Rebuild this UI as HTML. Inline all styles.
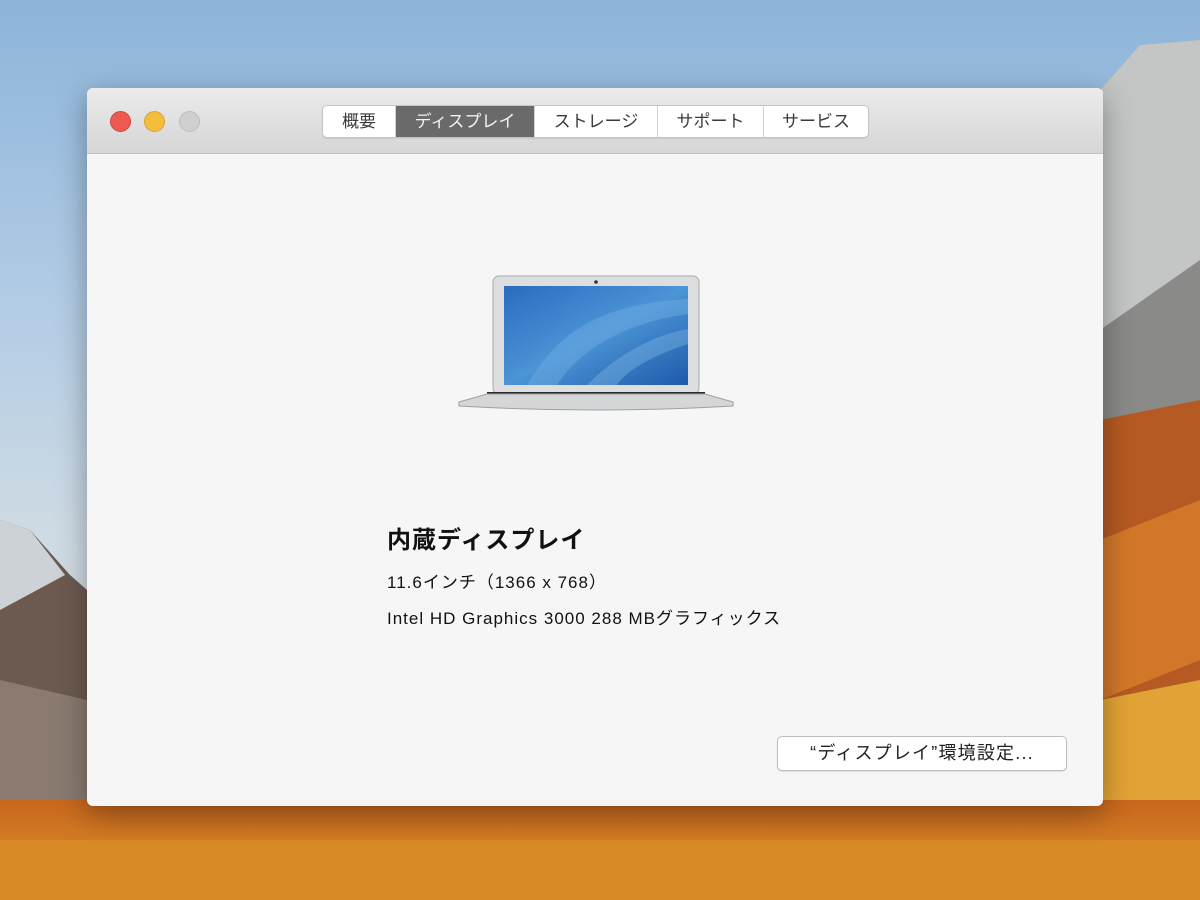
<!DOCTYPE html>
<html><head><meta charset="utf-8"><style>
body{margin:0;width:1200px;height:900px;overflow:hidden;position:relative;font-family:"Liberation Sans","Noto Sans CJK JP",sans-serif;
background:linear-gradient(180deg,#8db4da 0%,#b3cde5 35%,#cfdbe4 60%,#d8dde0 100%);}
.bg{position:absolute;inset:0}
.win{position:absolute;left:87px;top:88px;width:1016px;height:718px;background:#f6f6f6;border-radius:6px;box-shadow:0 8px 30px rgba(0,0,0,.35);overflow:hidden}
.tb{height:65px;background:linear-gradient(#ebebeb,#d6d6d6);border-bottom:1px solid #c2c2c2}
.dot{position:absolute;top:23px;width:20px;height:20px;border-radius:50%}
.tabs{position:absolute;left:235px;top:17px;height:31px;display:flex;border:1px solid #c4c4c4;border-radius:5px;background:#fff;overflow:hidden;box-shadow:0 1px 1px rgba(0,0,0,.08)}
.tabs div{font-size:17px;color:#3a3a3a;line-height:31px;text-align:center;border-right:1px solid #d3d3d3}
.tabs div:last-child{border-right:none}
.tabs .on{background:#6a6a6a;color:#f2f2f2}
.t{position:absolute;left:300px;color:#111;letter-spacing:1px;white-space:nowrap}
.btn{position:absolute;left:690px;top:648px;width:288px;height:33px;border:1px solid #bdbdbd;border-radius:5px;background:#fff;font-size:18px;letter-spacing:1.2px;text-align:center;line-height:33px;color:#222;box-shadow:0 1px 1px rgba(0,0,0,.1);white-space:nowrap}
</style></head><body>
<svg class="bg" width="1200" height="900">
<defs>
<linearGradient id="org" x1="0" y1="0" x2="0" y2="1"><stop offset="0" stop-color="#c8661e"/><stop offset="1" stop-color="#e09a2a"/></linearGradient>
<linearGradient id="scr" x1="0" y1="0" x2="1" y2="1"><stop offset="0" stop-color="#2a6cc0"/><stop offset=".5" stop-color="#4b94d6"/><stop offset="1" stop-color="#1d5aaa"/></linearGradient>
</defs>
<polygon points="1100,90 1140,45 1200,40 1200,900 1100,900" fill="#8a8a88"/>
<polygon points="1100,90 1140,45 1200,40 1200,260 1100,330" fill="#c4c6c6"/>
<polygon points="1100,420 1200,400 1200,900 1100,900" fill="#b55a22"/>
<polygon points="1100,540 1200,500 1200,660 1100,700" fill="#d2772a"/>
<polygon points="1100,700 1200,680 1200,900 1100,900" fill="#e2a336"/>
<polygon points="0,520 30,530 70,575 87,590 87,900 0,900" fill="#6c5a50"/>
<polygon points="0,520 30,530 65,575 0,610" fill="#cdd2d6"/>
<polygon points="0,680 87,700 87,900 0,900" fill="#8a7a70"/>
<rect x="0" y="800" width="1200" height="100" fill="url(#org)"/>
<rect x="0" y="840" width="1200" height="60" fill="#d88a26"/>
</svg>
<div class="win">
<div class="tb">
<div class="dot" style="left:23px;background:#ec5a52;border:1px solid #d6453e;width:19px;height:19px"></div>
<div class="dot" style="left:57px;background:#f4bd3c;border:1px solid #dca32b;width:19px;height:19px"></div>
<div class="dot" style="left:92px;background:#d0d0d0;border:1px solid #bdbdbd;width:19px;height:19px"></div>
<div class="tabs">
<div style="width:72px">概要</div>
<div class="on" style="width:138px">ディスプレイ</div>
<div style="width:122px">ストレージ</div>
<div style="width:105px">サポート</div>
<div style="width:104px">サービス</div>
</div>
</div>
<svg style="position:absolute;left:370px;top:186px" width="280" height="160">
<rect x="36" y="2" width="206" height="118" rx="6" fill="#dcdedf" stroke="#a9abad"/>
<circle cx="139" cy="8" r="1.8" fill="#333"/>
<rect x="47" y="12" width="184" height="99" fill="url(#scr)"/>
<path d="M70 111 C100 60 140 30 231 25 L231 40 C160 50 120 80 100 111Z" fill="#6fb0e2" opacity=".45"/>
<path d="M130 111 C160 80 200 60 231 55 L231 70 C200 80 170 95 160 111Z" fill="#8cc4ec" opacity=".35"/>
<rect x="30" y="118" width="218" height="5" fill="#2b2b2b"/>
<path d="M2 128 L30 120 L248 120 L276 128 L276 132 Q139 140 2 132Z" fill="#d4d6d8" stroke="#9ea0a2"/>
</svg>
<div class="t" style="top:432px;font-size:24px;font-weight:bold">内蔵ディスプレイ</div>
<div class="t" style="top:480px;font-size:17px">11.6インチ（1366 x 768）</div>
<div class="t" style="top:516px;font-size:17px">Intel HD Graphics 3000 288 MBグラフィックス</div>
<div class="btn">“ディスプレイ”環境設定...</div>
</div>
</body></html>
